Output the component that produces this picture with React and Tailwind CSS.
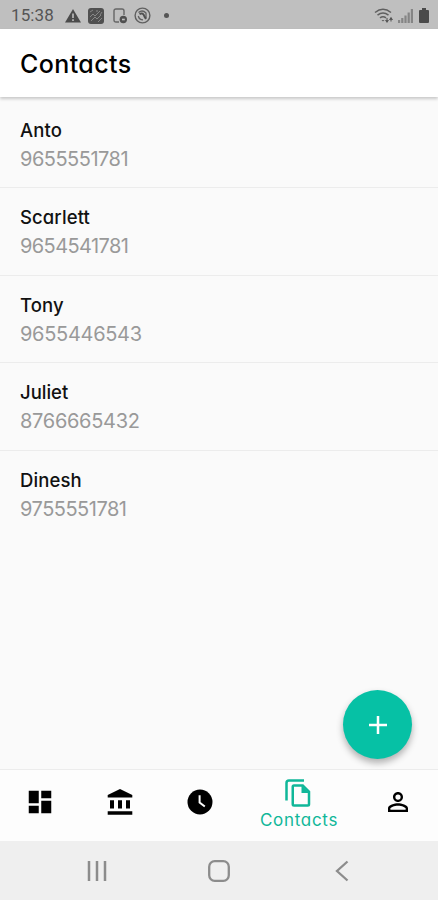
import React from "react";
import { MdDashboard, MdPersonOutline } from "react-icons/md";

const contacts = [
  { name: "Anto", phone: "9655551781", nameGap: "tracking-[0.1px]", phoneGap: "tracking-[-0.5px]" },
  { name: "Scarlett", phone: "9654541781", nameGap: "tracking-[0.1px]", phoneGap: "tracking-[-0.6px]" },
  { name: "Tony", phone: "9655446543", nameGap: "tracking-[0.1px]", phoneGap: "tracking-[-0.3px]" },
  { name: "Juliet", phone: "8766665432", nameGap: "tracking-[0px]", phoneGap: "tracking-[-0.3px]" },
  { name: "Dinesh", phone: "9755551781", nameGap: "tracking-[0.1px]", phoneGap: "tracking-[-0.5px]" },
];

// Phone status bar with the clock, notifications and signal
const StatusBar = () => {
  return (
    <div className="flex h-[29px] shrink-0 items-center bg-[#bfbfbf] pt-[2px] pl-[11px] pr-[9px] text-[#555]">
      <span className="w-[54px] font-[Roboto] text-[17px] leading-none tracking-[0.1px]">15:38</span>
      <svg className="h-[14px] w-4" viewBox="0 0 16 14">
        <path d="M8 0L16 13.5H0z" fill="#4b4b4b" />
        <path d="M8 4.5V9M8 10.3V12" stroke="#bfbfbf" strokeWidth="1.6" />
      </svg>
      <svg className="ml-[7px] h-4 w-4" viewBox="0 0 16 16">
        <rect width="16" height="16" rx="3" fill="#505050" />
        <path d="M2 4l3-2M2 9l3-3 2 2 5-5M3 13l4-4 2 2 4-4M10 14l4-4M8 3h2M12 7l2-3" stroke="#888" strokeWidth="1" fill="none" />
      </svg>
      <svg className="ml-[9px] h-4 w-[15px]" viewBox="0 0 15 16" fill="none">
        <path d="M6 14H3Q1 14 1 12V3Q1 1 3 1H9Q11 1 11 3V7" stroke="#666" strokeWidth="1.4" />
        <circle cx="10.3" cy="11.5" r="3.7" fill="#505050" />
        <path d="M9 11.5h2.8" stroke="#bfbfbf" strokeWidth="1.6" />
      </svg>
      <svg className="ml-[6px] h-[17px] w-[17px]" viewBox="0 0 17 17" fill="none">
        <circle cx="8.5" cy="8.5" r="7.4" stroke="#606060" strokeWidth="1.4" />
        <path d="M4.5 5.5Q8.5 2.3 12 6V11M4.3 9Q5.2 12.8 9 12.9" stroke="#606060" strokeWidth="1.3" />
        <path d="M5.5 7Q9 5.2 10.5 9.5L12 12" stroke="#505050" strokeWidth="2" />
      </svg>
      <span className="ml-[13px] h-[5px] w-[5px] rounded-full bg-[#555]" />
      <svg className="ml-auto h-4 w-5" viewBox="0 0 20 16" fill="none" stroke="#606060">
        <path d="M1 4.5Q9 -2 17 4.5M3.5 7.2Q9 2.8 14.5 7.2M6 9.8Q9 7.5 12 9.8" strokeWidth="1.5" />
        <path d="M7.5 12h3l-1.5 1.5z" fill="#606060" stroke="none" />
        <path d="M11 12h4l-2 3zM15 12h4l-2-3.2z" fill="#505050" stroke="none" />
        <path d="M13 10v3M17 11v2.5" strokeWidth="1.2" />
      </svg>
      <svg className="ml-1 h-[14px] w-[15px]" viewBox="0 0 15 14" fill="#858585">
        <path d="M0 11h2.2v3H0zM3.2 9h2.2v5H3.2zM6.4 6.5h2.2V14H6.4zM9.6 3.5h2.2V14H9.6zM12.8 0H15v14h-2.2z" />
      </svg>
      <svg className="ml-[6px] h-[15px] w-[10px]" viewBox="0 0 10 15" fill="#4b4b4b">
        <path d="M3 0h4v2h2q1 0 1 1v11q0 1-1 1H1q-1 0-1-1V3q0-1 1-1h2z" />
      </svg>
    </div>
  );
};

// Single row of the contact list
const ContactRow = ({ contact, last }) => {
  return (
    <div className={`h-[87.6px] pt-[14px] pl-5 ${last ? "" : "border-b border-[#ececec]"}`}>
      <p className={`text-[18.5px] leading-[30px] font-medium text-[#111] ${contact.nameGap}`}>{contact.name}</p>
      <p className={`text-[20px] leading-[28px] text-[#999] ${contact.phoneGap}`}>{contact.phone}</p>
    </div>
  );
};

const BankIcon = () => {
  return (
    <svg className="mx-auto h-[26px] w-[26px]" viewBox="0 0 26 26" fill="currentColor">
      <path d="M13 0L25.3 6V8.5H.7V6zM3 11.2h4v8.2H3zM11 11.2h4v8.2h-4zM19 11.2h4v8.2h-4zM.7 22.2h24.6v3.5H.7z" />
    </svg>
  );
};

const ClockIcon = () => {
  return (
    <svg className="mx-auto h-[26px] w-[26px]" viewBox="0 0 26 26" fill="none">
      <circle cx="13" cy="13" r="12.5" fill="currentColor" />
      <path d="M12.6 6.3v7.2l5.2 4" stroke="#fdfdfd" strokeWidth="2" />
    </svg>
  );
};

// Two sheets, the front one has a filled corner
const CopyIcon = () => {
  return (
    <svg className="h-[30px] w-[30px]" viewBox="0 0 24 24" fill="none" stroke="currentColor" strokeWidth="2">
      <path d="M2 18V4Q2 2 4 2H16" />
      <path d="M8 6H15L20 11V21Q20 22 19 22H8Q7 22 7 21V7Q7 6 8 6Z" />
      <path d="M14 6V12H20Z" fill="currentColor" stroke="none" />
    </svg>
  );
};

// Bottom tabs, the contacts tab is the active one
const TabBar = () => {
  return (
    <div className="grid h-[72px] shrink-0 grid-cols-[80px_80px_80px_118px_80px] items-center border-t border-[#ececec] bg-[#fdfdfd] pb-[8px] text-black">
      <MdDashboard className="mx-auto" size={30} />
      <BankIcon />
      <ClockIcon />
      <div className="flex flex-col items-center pt-[7px] text-[#10b799]">
        <CopyIcon />
        <span className="text-[17px] leading-6 tracking-[0.7px]">Contacts</span>
      </div>
      <MdPersonOutline className="mx-auto" size={30} />
    </div>
  );
};

// Android navigation buttons
const SystemNav = () => {
  return (
    <div className="flex h-[59px] shrink-0 items-center bg-[#efefef] pl-[86px] text-[#8c8c8c]">
      <svg className="h-[22px] w-[22px]" viewBox="0 0 22 22" stroke="currentColor" strokeWidth="2.5">
        <path d="M3 1v20M11 1v20M19 1v20" />
      </svg>
      <svg className="ml-[100px] h-[22px] w-[22px]" viewBox="0 0 22 22" fill="none" stroke="currentColor" strokeWidth="2.3">
        <rect x="1.2" y="1.2" width="19.6" height="19.6" rx="5.5" />
      </svg>
      <svg className="ml-[105px] h-[22px] w-[14px]" viewBox="0 0 14 22" fill="none" stroke="currentColor" strokeWidth="2.3">
        <path d="M12.5 1.5L2 11l10.5 9.5" />
      </svg>
    </div>
  );
};

const App = () => {
  return (
    <div className="flex h-[900px] w-[438px] flex-col overflow-hidden bg-[#fafafa] font-['Inter','Open_Sans',sans-serif] [font-feature-settings:'cv11']">
      <StatusBar />
      <header className="z-10 flex h-[68px] shrink-0 items-center bg-white pt-[3px] pl-5 shadow-[0_2px_3px_rgba(0,0,0,0.2)]">
        <h1 className="text-[25px] font-medium tracking-[0.4px] text-black">Contacts</h1>
      </header>
      <main className="relative flex-1 pt-[3.6px]">
        {contacts.map((contact, index) => (
          <ContactRow key={contact.name} contact={contact} last={index === contacts.length - 1} />
        ))}
        <button className="absolute right-[26px] bottom-[10px] z-10 flex h-[69px] w-[69px] items-center justify-center rounded-full bg-[#06c1a5] shadow-[0_4px_7px_rgba(0,0,0,0.3)]">
          <svg className="h-[18px] w-[18px]" viewBox="0 0 18 18" stroke="#fff" strokeWidth="2.5">
            <path d="M9 0v18M0 9h18" />
          </svg>
        </button>
      </main>
      <TabBar />
      <SystemNav />
    </div>
  );
};

export default App;
